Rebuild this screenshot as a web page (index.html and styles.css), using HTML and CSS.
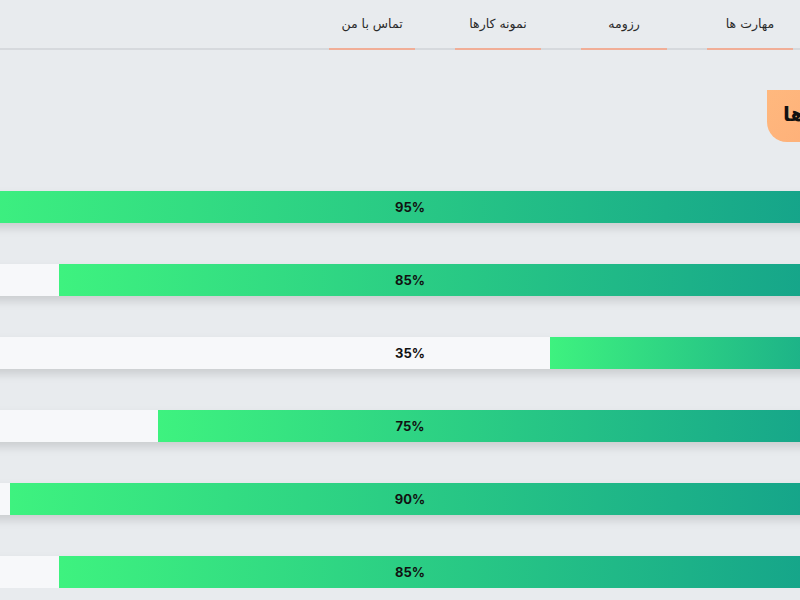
FILE: index.html
```html
<!DOCTYPE html>
<html lang="fa" dir="rtl">
<head>
<meta charset="utf-8">
<title>مهارت ها</title>
<link rel="stylesheet" href="styles.css">
</head>
<body>
<nav class="nav">
  <ul class="menu">
    <li class="item">مهارت ها</li>
    <li class="item">رزومه</li>
    <li class="item">نمونه کارها</li>
    <li class="item">تماس با من</li>
  </ul>
</nav>
<section class="skills">
  <h2 class="badge">مهارت ها</h2>
  <div class="list">
    <div class="bar"><div class="fill" style="width:95%"></div><span class="label">95%</span></div>
    <div class="bar"><div class="fill" style="width:85%"></div><span class="label">85%</span></div>
    <div class="bar"><div class="fill" style="width:35%"></div><span class="label">35%</span></div>
    <div class="bar"><div class="fill" style="width:75%"></div><span class="label">75%</span></div>
    <div class="bar"><div class="fill" style="width:90%"></div><span class="label">90%</span></div>
    <div class="bar"><div class="fill" style="width:85%"></div><span class="label">85%</span></div>
  </div>
</section>
</body>
</html>
```
FILE: styles.css
```css
html, body {
  margin: 0;
  padding: 0;
  overflow-x: hidden;
}
body {
  background: #e8ebee;
  font-family: "DejaVu Sans", "Noto Sans", sans-serif;
  color: #222;
}
.nav {
  height: 48px;
  border-bottom: 2px solid #d6d9dd;
}
.menu {
  list-style: none;
  margin: 0;
  padding: 0 7px 0 0;
  display: flex;
  gap: 40px;
  height: 100%;
}
.item {
  width: 86px;
  display: flex;
  align-items: center;
  justify-content: center;
  font-size: 12.5px;
  color: #2a2a2a;
  border-bottom: 2px solid #f1ae97;
  margin-bottom: -2px;
  padding-bottom: 2px;
}
.skills {
  margin: 40px -94px 0 -88px;
  display: flex;
  flex-direction: column;
  align-items: flex-start;
}
.badge {
  box-sizing: border-box;
  margin: 0;
  height: 52px;
  display: flex;
  align-items: center;
  padding: 0 18px 4px 16px;
  font-size: 20px;
  font-weight: 600;
  color: #111;
  background: linear-gradient(135deg, #ffb87e, #fcaa75);
  border-bottom-left-radius: 20px;
}
.list {
  align-self: stretch;
  margin-top: 49px;
  display: flex;
  flex-direction: column;
  gap: 41px;
}
.bar {
  height: 32px;
  display: grid;
  background: #f7f8fa;
  box-shadow: 0 5px 9px rgba(0, 0, 0, 0.13);
}
.fill, .label {
  grid-area: 1 / 1;
}
.fill {
  justify-self: start;
  height: 100%;
  background: linear-gradient(to right, #3ef27f, #119c8b);
}
.label {
  align-self: center;
  justify-self: center;
  padding-left: 14px;
  font-family: Inter, Roboto, "Liberation Sans", sans-serif;
  font-weight: 700;
  font-size: 13px;
  color: #111;
  direction: ltr;
}
```
